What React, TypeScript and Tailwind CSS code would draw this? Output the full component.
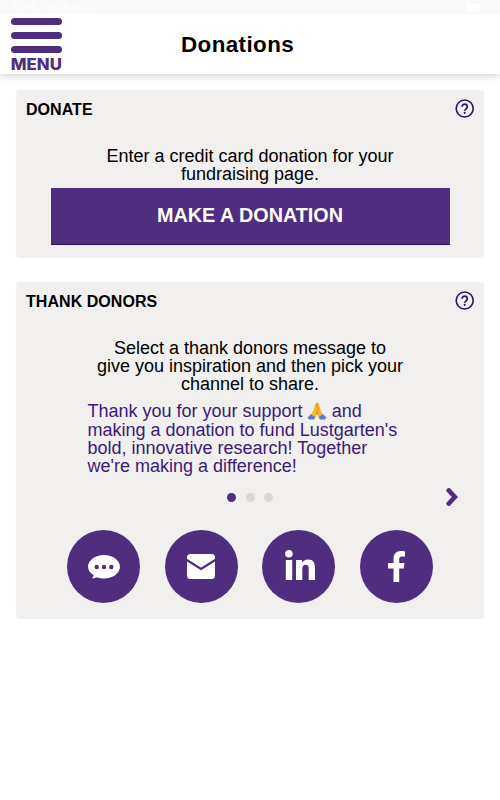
import { ReactNode } from "react";

const HelpIcon = () => (
  <svg width="20" height="20" viewBox="0 0 20 20" fill="none" stroke="#2c1068">
    <circle cx="9.7" cy="9.5" r="8.5" strokeWidth="1.6" />
    <path d="M7.1 7.7a2.6 2.6 0 1 1 4.2 2.05c-.9.65-1.6 1.1-1.6 2" strokeWidth="1.7" />
    <circle cx="9.7" cy="13.8" r="1.1" fill="#2c1068" stroke="none" />
  </svg>
);

const PrayIcon = () => (
  <svg
    className="-ml-px inline-block align-[-3px]"
    width="20"
    height="18"
    viewBox="0 0 20 18"
    role="img"
    aria-label="🙏"
  >
    <path d="M.5 15.5 4.6 11.8 8.8 14.6 7 17.6H2Z" fill="#5b78dc" />
    <path d="M19.5 15.5 15.4 11.8 11.2 14.6 13 17.6h5Z" fill="#5b78dc" />
    <path d="M9.9 1C9.7.4 8.5.6 8.3 1.5L6.8 7 4.4 12.2l3.7 3.1L10 12.5Z" fill="#fbb72f" />
    <path d="M10.1 1c.2-.6 1.4-.4 1.6.5L13.2 7l2.4 5.2-3.7 3.1L10 12.5Z" fill="#f9b02a" />
    <path d="M10 1.5v11" stroke="#c77d12" strokeWidth=".7" />
  </svg>
);

const Card = ({ title, className, children }: { title: string; className: string; children: ReactNode }) => (
  <section className={`mx-4 rounded-[4px] bg-[#f1f0ef] ${className}`}>
    <div className="flex h-5 items-center justify-between pr-[9px] pl-[10px]">
      <h2 className="pt-0.5 text-[16px] leading-5 font-bold tracking-[0.05px]">{title}</h2>
      <button aria-label={`${title} help`}>
        <HelpIcon />
      </button>
    </div>
    {children}
  </section>
);

const ShareButton = ({ label, children }: { label: string; children: ReactNode }) => (
  <button
    aria-label={label}
    className="flex size-[73px] items-center justify-center rounded-full bg-[#4f2d7f]"
  >
    {children}
  </button>
);

const App = () => {
  return (
    <div className="h-[800px] overflow-hidden bg-white font-['Liberation_Sans',Arial,sans-serif] text-black">
      <div className="relative z-10 flex h-[14px] items-center justify-between bg-[#f9f9f9] px-3 text-[10px] leading-3 text-white">
        <span>10:45 &nbsp;Thu Aug 29</span>
        <span className="mr-2 h-[7px] w-[14px] rounded-[2px] bg-white"></span>
      </div>
      <header className="relative flex h-[60px] items-center shadow-[0_1px_8px_rgba(0,0,0,0.22)]">
        <button className="absolute top-[4px] left-[11px] flex w-[51px] flex-col items-center">
          <span className="h-[7px] w-full rounded-full bg-[#4f2d7f]"></span>
          <span className="mt-[7px] h-[7px] w-full rounded-full bg-[#4f2d7f]"></span>
          <span className="mt-[7px] h-[7px] w-full rounded-full bg-[#4f2d7f]"></span>
          <svg className="mt-px overflow-visible" width="51" height="20" viewBox="0 0 51 20">
            <text
              x="-0.2"
              y="16"
              textLength="51"
              lengthAdjust="spacingAndGlyphs"
              fontSize="15.5"
              fontWeight="800"
              fill="#4f2d7f"
              className="font-[Inter,sans-serif]"
            >
              MENU
            </text>
          </svg>
        </button>
        <h1 className="ml-[181px] pt-px text-[22.4px] leading-[26px] font-bold tracking-[0.4px]">Donations</h1>
      </header>

      <Card title="DONATE" className="mt-4 h-[168px] pt-[9px]">
        <p className="mt-[28px] text-center text-[18px] leading-[18px]">
          Enter a credit card donation for your
          <br />
          fundraising page.
        </p>
        <button className="mx-auto mt-[5px] flex h-[57px] w-[399px] items-center justify-center border-b border-[#2c1068] bg-[#4f2d7f] text-[19.8px] font-bold text-white">
          MAKE A DONATION
        </button>
      </Card>

      <Card title="THANK DONORS" className="mt-[24px] h-[337px] pt-[9px]">
        <p className="mt-[28px] text-center text-[18px] leading-[18px]">
          Select a thank donors message to
          <br />
          give you inspiration and then pick your
          <br />
          channel to share.
        </p>
        <div className="mt-[9px] ml-[71.5px] text-[18px] leading-[18px] text-[#3b1a78]">
          <p className="h-[19px]">
            Thank you for your support <PrayIcon /> and
          </p>
          <p>
            making a donation to fund Lustgarten's
            <br />
            bold, innovative research! Together
            <br />
            we're making a difference!
          </p>
        </div>
        <div className="mt-[12px] flex h-5 items-center pl-[211px]">
          <span className="size-[9px] rounded-full bg-[#4f2d7f]"></span>
          <span className="ml-[9.5px] size-[9px] rounded-full bg-[#d8d7d3]"></span>
          <span className="ml-[9.5px] size-[9px] rounded-full bg-[#d8d7d3]"></span>
          <svg className="ml-[173px]" width="12" height="18" viewBox="0 0 12 18" fill="none">
            <path d="M2.7 2.4 8.9 9l-6.2 6.6" stroke="#4f2d7f" strokeWidth="4.5" strokeLinecap="round" />
          </svg>
        </div>
        <div className="mt-[23px] flex gap-[24.5px] pl-[51px]">
          <ShareButton label="Text message">
            <svg width="32" height="24" viewBox="0 0 32 24">
              <path
                d="M16 0c8.8 0 16 5.2 16 11.700s-7.2 11.700-16 11.700c-2.600 0-5-.4-7.100-1.200-1.300.8-3 1.200-5 1.100 1-.9 1.600-2 1.800-3.200C2.200 18 0 15 0 11.700 0 5.200 7.200 0 16 0Z"
                fill="#fff"
              />
              <g fill="#4f2d7f">
                <circle cx="8.7" cy="12" r="2.2" />
                <circle cx="16" cy="12" r="2.2" />
                <circle cx="23.3" cy="12" r="2.2" />
              </g>
            </svg>
          </ShareButton>
          <ShareButton label="Email">
            <svg width="28" height="25" viewBox="0 0 28 25">
              <rect width="28" height="25" rx="3.5" fill="#fff" />
              <path d="M-1 5.5 14 15 29 5.5" fill="none" stroke="#4f2d7f" strokeWidth="2.2" />
            </svg>
          </ShareButton>
          <ShareButton label="LinkedIn">
            <svg className="mb-1 ml-0.5" width="30" height="30" viewBox="0 0 30 30" fill="#fff">
              <circle cx="3.9" cy="3.8" r="3.8" />
              <path d="M.8 10h6.4v20H.8ZM11 10h6v2.700c1-1.900 3.100-3.200 5.900-3.200 5.500 0 7.100 3.400 7.100 8.500v12h-6.300V19c0-2.700-.5-4.300-2.900-4.300-2.500 0-3.500 1.700-3.500 4.300v11H11Z" />
            </svg>
          </ShareButton>
          <ShareButton label="Facebook">
            <svg width="17" height="31" viewBox="0 0 17 31" fill="#fff">
              <path d="M5.500 31V17.500H0v-5.500h5.500V7.700C5.500 2.900 8.300 0 12.800 0c1.500 0 3 .2 4.200.4v5h-2.800c-2.300 0-3 1.300-3 2.900V12H16.400l-.7 5.500h-4.500V31Z" />
            </svg>
          </ShareButton>
        </div>
      </Card>
    </div>
  );
};

export default App;
